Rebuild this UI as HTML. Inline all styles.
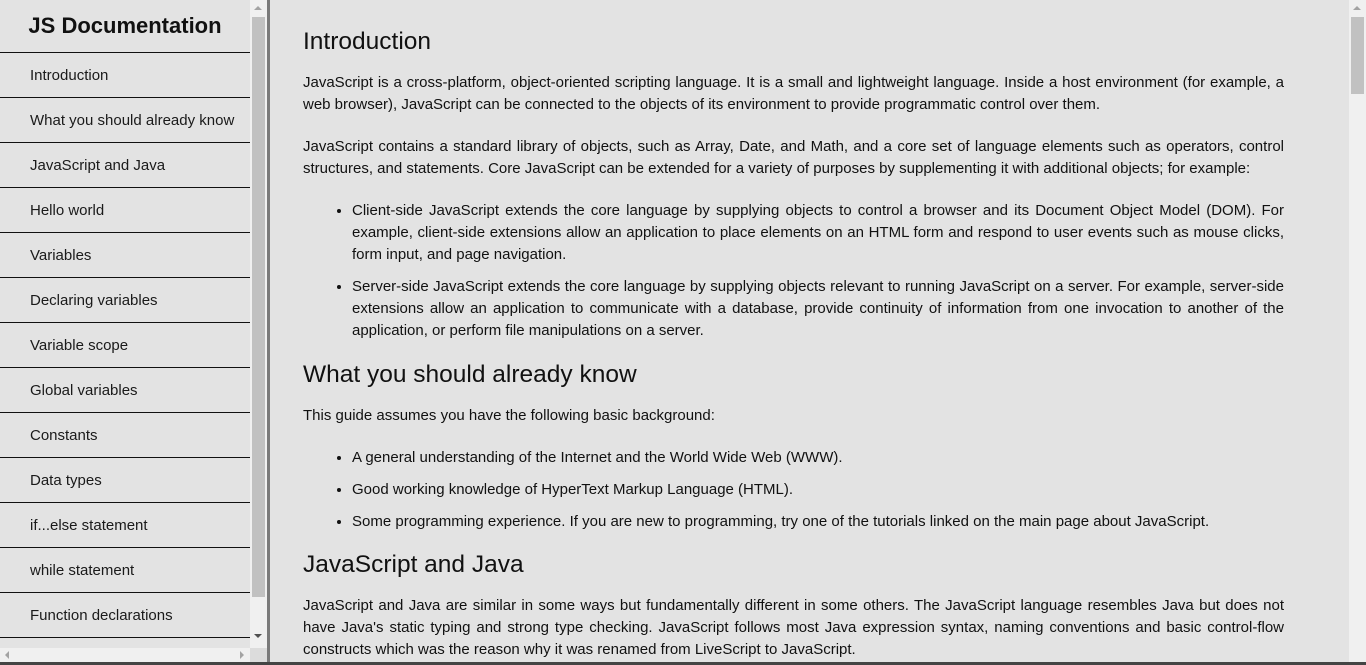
<!DOCTYPE html>
<html><head><meta charset="utf-8"><style>
*{margin:0;padding:0;box-sizing:border-box}
body{width:1366px;height:665px;overflow:hidden;background:#e3e3e3;font-family:"Liberation Sans",Arial,sans-serif;color:#111;position:relative}
#nav{position:absolute;left:0;top:0;width:250px;height:648px;overflow:hidden}
#nav h2{height:53px;border-bottom:1px solid #111;font-size:22px;text-align:center;line-height:51px;font-weight:bold;color:#111}
#nav a{display:block;height:45px;border-bottom:1px solid #111;font-size:15px;line-height:46px;padding-left:30px;color:#1a1a1a;text-decoration:none}
.vs{position:absolute;background:#f0f0f0}
.th{position:absolute;background:#c1c1c1}
.ar{position:absolute;width:0;height:0}
#main{position:absolute;left:303px;top:0;width:981px;font-size:15px;line-height:22px}
#main h1{font-size:24.5px;font-weight:normal;line-height:30px}
#main p{text-align:justify}
#main ul{padding-left:49px}
#main li{text-align:justify}
</style></head><body>
<div id="nav">
<h2>JS Documentation</h2>
<a>Introduction</a><a>What you should already know</a><a>JavaScript and Java</a><a>Hello world</a><a>Variables</a><a>Declaring variables</a><a>Variable scope</a><a>Global variables</a><a>Constants</a><a>Data types</a><a>if...else statement</a><a>while statement</a><a>Function declarations</a>
</div>
<div class="vs" style="left:250px;top:0;width:17px;height:662px"></div>
<div class="th" style="left:252px;top:17px;width:13px;height:580px"></div>
<div class="ar" style="left:254px;top:6px;border:4px solid transparent;border-bottom:4px solid #a3a3a3;border-top:0"></div>
<div class="ar" style="left:254px;top:634px;border:4px solid transparent;border-top:4px solid #505050;border-bottom:0"></div>
<div class="vs" style="left:0;top:648px;width:250px;height:14px"></div>
<div class="ar" style="left:5px;top:651px;border:4px solid transparent;border-right:4px solid #a3a3a3;border-left:0"></div>
<div class="ar" style="left:240px;top:651px;border:4px solid transparent;border-left:4px solid #a3a3a3;border-right:0"></div>
<div style="position:absolute;left:250px;top:648px;width:17px;height:14px;background:#dcdcdc"></div>
<div style="position:absolute;left:267px;top:0;width:3px;height:665px;background:#7a7a7a"></div>
<div style="position:absolute;left:0;top:662px;width:1366px;height:3px;background:#444"></div>
<div class="vs" style="left:1349px;top:0;width:17px;height:662px"></div>
<div class="th" style="left:1351px;top:17px;width:13px;height:77px"></div>
<div class="ar" style="left:1353px;top:6px;border:4px solid transparent;border-bottom:4px solid #a3a3a3;border-top:0"></div>
<div id="main">
<h1 style="margin-top:27px;margin-bottom:15px">Introduction</h1>
<p>JavaScript is a cross-platform, object-oriented scripting language. It is a small and lightweight language. Inside a host environment (for example, a web browser), JavaScript can be connected to the objects of its environment to provide programmatic control over them.</p>
<p style="margin-top:20px">JavaScript contains a standard library of objects, such as Array, Date, and Math, and a core set of language elements such as operators, control structures, and statements. Core JavaScript can be extended for a variety of purposes by supplementing it with additional objects; for example:</p>
<ul style="margin-top:20px">
<li>Client-side JavaScript extends the core language by supplying objects to control a browser and its Document Object Model (DOM). For example, client-side extensions allow an application to place elements on an HTML form and respond to user events such as mouse clicks, form input, and page navigation.</li>
<li style="margin-top:10px">Server-side JavaScript extends the core language by supplying objects relevant to running JavaScript on a server. For example, server-side extensions allow an application to communicate with a database, provide continuity of information from one invocation to another of the application, or perform file manipulations on a server.</li>
</ul>
<h1 style="margin-top:18px;margin-bottom:15px">What you should already know</h1>
<p>This guide assumes you have the following basic background:</p>
<ul style="margin-top:20px">
<li>A general understanding of the Internet and the World Wide Web (WWW).</li>
<li style="margin-top:10px">Good working knowledge of HyperText Markup Language (HTML).</li>
<li style="margin-top:10px">Some programming experience. If you are new to programming, try one of the tutorials linked on the main page about JavaScript.</li>
</ul>
<h1 style="margin-top:17px;margin-bottom:15px">JavaScript and Java</h1>
<p>JavaScript and Java are similar in some ways but fundamentally different in some others. The JavaScript language resembles Java but does not have Java's static typing and strong type checking. JavaScript follows most Java expression syntax, naming conventions and basic control-flow constructs which was the reason why it was renamed from LiveScript to JavaScript.</p>
</div>
</body></html>
